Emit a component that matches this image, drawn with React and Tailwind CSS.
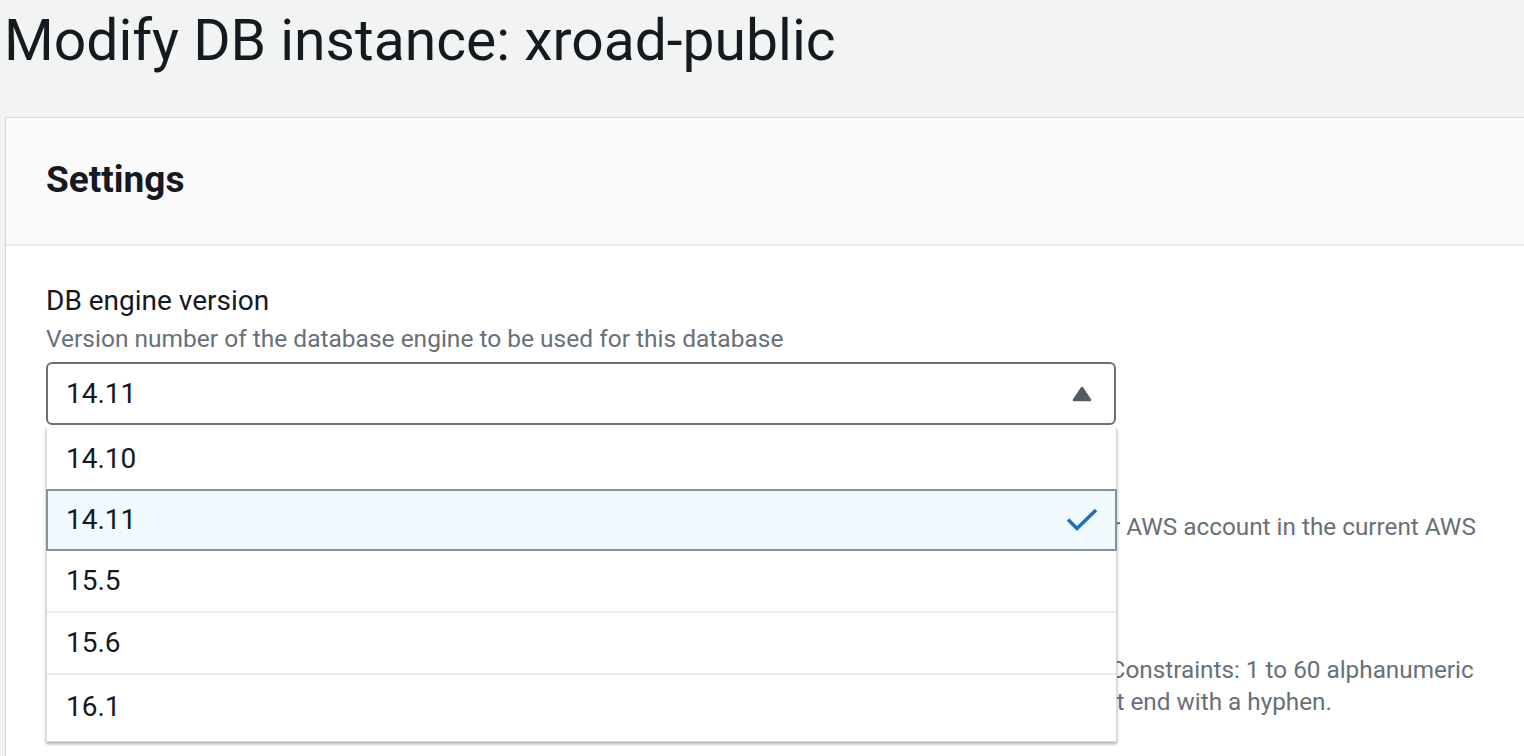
const versions = ['14.10', '14.11', '15.5', '15.6', '16.1'];
const selected = '14.11';

function CaretUp() {
  return (
    <svg width="20" height="16" viewBox="0 0 20 16" aria-hidden="true">
      <path d="M10 2 L18 14 H2 Z" fill="#545b64" stroke="#545b64" strokeWidth="2.5" strokeLinejoin="round" />
    </svg>
  );
}

function Check() {
  return (
    <svg width="32" height="24" viewBox="0 0 32 24" aria-hidden="true">
      <polyline points="2,11.5 11,20.5 30,2" fill="none" stroke="#1f6fc5" strokeWidth="3.5" />
    </svg>
  );
}

function VersionOption({ value }) {
  const isSelected = value === selected;
  if (isSelected) {
    return (
      <div className="-mx-px flex h-[62px] items-center justify-between border-2 border-[#879596] bg-[#f1faff] pl-[18px] pr-[17px]">
        <span>{value}</span>
        <Check />
      </div>
    );
  }
  const last = value === versions[versions.length - 1];
  const first = value === versions[0];
  return (
    <div
      className={
        first
          ? 'flex h-[61px] items-center pl-[19px]'
          : last
            ? 'flex h-[66px] items-center pb-[2px] pl-[19px]'
            : 'flex h-[62px] items-center border-b-2 border-[#eaeded] pl-[19px]'
      }
    >
      {value}
    </div>
  );
}

function EngineVersionSelect() {
  return (
    <div className="relative mt-[7px] w-[1070px]">
      <div className="flex h-[63px] items-center justify-between rounded-[6px] border-2 border-[#687078] bg-white pl-[18px] pr-[22px] text-[28px]">
        <span>{selected}</span>
        <CaretUp />
      </div>

      <div className="absolute left-0 top-[66px] z-10 w-[1071px] border border-t-0 border-[#d5dbdb] bg-white text-[28px] shadow-[0_2px_3px_rgba(0,28,36,0.35)]">
        {versions.map((v) => (
          <VersionOption key={v} value={v} />
        ))}
      </div>
    </div>
  );
}

export default function App() {
  return (
    <div className="min-h-screen overflow-hidden bg-[#f2f3f3] font-['Roboto',sans-serif] text-[#16191f]">
      <header className="h-[117px] pl-[4px] pt-[7px]">
        <h1 className="text-[57px] font-normal leading-[68px]">Modify DB instance: xroad-public</h1>
      </header>

      <section className="-mr-10 ml-[5px] border-l border-t border-[#d5dbdb] bg-white shadow-[0_1px_1px_rgba(0,28,36,0.15)]">
        <div className="flex h-[128px] items-center border-b-2 border-[#eaeded] bg-[#fafafa] pb-[3px] pl-[40px]">
          <h2 className="text-[37px] font-bold leading-[44px]">Settings</h2>
        </div>

        <div className="pb-10 pl-[40px] pt-[36px]">
          <div>
            <label className="block text-[28px] leading-[38px]">DB engine version</label>
            <p className="mt-[3px] text-[24.5px] leading-[32px] text-[#687078]">
              Version number of the database engine to be used for this database
            </p>
            <EngineVersionSelect />
          </div>

          <div className="mt-[45px]">
            <label className="block text-[28px] leading-[38px]">DB instance identifier</label>
            <p className="mt-[3px] w-[1442px] text-[24.3px] leading-[32px] text-[#687078]">
              Type a name for your DB instance. The name must be unique across all DB instances owned by your AWS account in the current AWS Region.
            </p>
            <div className="mt-[7px] flex h-[63px] w-[1070px] items-center rounded-[6px] border-2 border-[#687078] pl-[18px] text-[28px]">
              xroad-public
            </div>
            <p className="mt-[9px] w-[1442px] text-[24.3px] leading-[32px] text-[#687078]">
              The DB instance identifier is case-insensitive, but is stored as all lowercase (as in "mydbinstance"). Constraints: 1 to 60 alphanumeric characters or hyphens. First character must be a letter. Can't contain two consecutive hyphens. Can't end with a hyphen.
            </p>
          </div>
        </div>
      </section>
    </div>
  );
}
